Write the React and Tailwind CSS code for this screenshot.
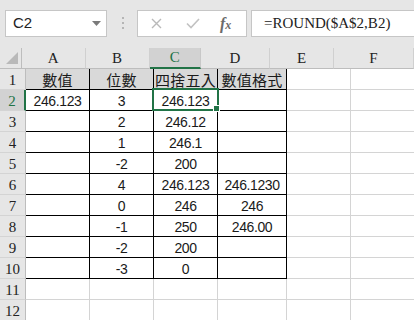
import React from "react";

const serif = { fontFamily: '"Liberation Serif", "Noto Sans CJK TC", serif' };

const cols = [
  { key: "A", w: "w-[64px]" },
  { key: "B", w: "w-[64px]" },
  { key: "C", w: "w-[64px]" },
  { key: "D", w: "w-[69px]" },
  { key: "E", w: "w-[64px]" },
  { key: "F", w: "w-[80px]" },
];

const rows = [
  ["數值", "位數", "四捨五入", "數值格式"],
  ["246.123", "3", "246.123", ""],
  ["", "2", "246.12", ""],
  ["", "1", "246.1", ""],
  ["", "-2", "200", ""],
  ["", "4", "246.123", "246.1230"],
  ["", "0", "246", "246"],
  ["", "-1", "250", "246.00"],
  ["", "-2", "200", ""],
  ["", "-3", "0", ""],
  ["", "", "", ""],
  ["", "", "", ""],
];

function Toolbar() {
  return (
    <div className="h-[48px] flex items-start pt-[10px] pl-[5px] bg-[#e6e6e6]">
      <div className="w-[102px] h-[27px] bg-white border border-[#c6c6c6] flex items-center justify-between pl-[7px] pr-[5px]">
        <span className="text-[15px] text-[#222]" style={{ fontFamily: '"Liberation Sans", sans-serif' }}>C2</span>
        <svg width="9" height="5" viewBox="0 0 9 5"><path d="M0 0h9L4.5 5z" fill="#7a7a7a" /></svg>
      </div>
      <div className="ml-[15px] mt-[7px] flex flex-col gap-[3px]">
        <span className="w-[2px] h-[2px] bg-[#b5b5b5]" />
        <span className="w-[2px] h-[2px] bg-[#b5b5b5]" />
        <span className="w-[2px] h-[2px] bg-[#b5b5b5]" />
      </div>
      <div className="ml-[13px] w-[110px] h-[27px] bg-white border border-[#c6c6c6] flex items-center">
        <svg className="ml-[13px]" width="11" height="11" viewBox="0 0 11 11">
          <path d="M1 1l9 9M10 1l-9 9" stroke="#b9b9b9" strokeWidth="1.4" />
        </svg>
        <svg className="ml-[24px]" width="14" height="11" viewBox="0 0 14 11">
          <path d="M1 5.5l4 4 8-8.5" stroke="#c2c2c2" strokeWidth="1.6" fill="none" />
        </svg>
        <span className="ml-[20px] text-[16px] italic font-bold text-[#6b6b6b] leading-none" style={serif}>
          f<span className="text-[12px]">x</span>
        </span>
      </div>
      <div className="ml-[4px] flex-1 h-[27px] bg-white border border-[#c6c6c6] border-r-0 flex items-center pl-[12px]">
        <span className="text-[15px] text-[#222]" style={serif}>=ROUND($A$2,B2)</span>
      </div>
    </div>
  );
}

function HeaderRow() {
  return (
    <div className="flex h-[21px] bg-[#e6e6e6]">
      <div className="w-[26px] h-[21px] box-border border-r border-b border-[#bdbdbd] flex items-end justify-end pr-[3px] pb-[4px]">
        <svg width="12" height="12" viewBox="0 0 12 12"><path d="M12 0V12H0z" fill="#b9b9b9" /></svg>
      </div>
      {cols.map((c) =>
        c.key === "C" ? (
          <div key={c.key} className={`${c.w} h-[21px] box-border border-r border-[#c8c8c8] border-b-2 border-b-[#217346] bg-[#d2d2d2] flex items-center justify-center text-[15px] text-[#217346]`} style={serif}>
            {c.key}
          </div>
        ) : (
          <div key={c.key} className={`${c.w} shrink-0 h-[21px] box-border border-r border-b border-r-[#d0d0d0] border-b-[#bdbdbd] flex items-center justify-center text-[15px] text-[#222]`} style={serif}>
            {c.key}
          </div>
        )
      )}
    </div>
  );
}

function Cell({ col, ri, value }) {
  const inTable = ri < 10 && col < 4;
  const isText = ri === 0;
  return (
    <div
      className={`${cols[col].w} shrink-0 h-[21px] box-border border-r border-b relative flex items-center justify-center whitespace-nowrap text-[#1a1a1a] ${
        inTable ? "border-r-black border-b-black" : "border-r-[#d4d4d4] border-b-[#d4d4d4]"
      } ${
        inTable && isText ? "bg-[#d9d9d9] text-[15px]" : "bg-white text-[14px] tracking-[-0.4px]"
      }`}
      style={{
        fontFamily: isText
          ? '"Noto Sans CJK TC", sans-serif'
          : '"Liberation Sans", sans-serif',
      }}
    >
      <span className={isText ? "leading-none tracking-[0.3px]" : "leading-none pt-[1px]"}>{value}</span>
      {ri === 1 && col === 2 && (
        <div className="absolute -left-[2px] -top-[2px] w-[67px] h-[23px] border-2 border-[#217346] z-10">
          <div className="absolute left-[59px] top-[15px] w-[7px] h-[7px] bg-[#217346] border border-white" />
        </div>
      )}
    </div>
  );
}

export default function App() {
  return (
    <div className="w-[414px] h-[320px] overflow-hidden bg-white">
      <Toolbar />
      <HeaderRow />
      {rows.map((r, ri) => (
        <div key={ri} className="flex h-[21px]">
          <div
            className={`w-[26px] shrink-0 h-[21px] box-border border-b border-b-[#d4d4d4] flex items-center justify-center text-[15px] pt-[2px] ${
              ri === 1
                ? "bg-[#d2d2d2] text-[#217346] border-r-2 border-r-[#217346]"
                : "bg-[#e6e6e6] text-[#222] border-r border-r-[#bdbdbd]"
            }`}
            style={serif}
          >
            {ri + 1}
          </div>
          {[0, 1, 2, 3, 4, 5].map((ci) => (
            <Cell key={ci} col={ci} ri={ri} value={ci < 4 ? r[ci] : ""} />
          ))}
        </div>
      ))}
    </div>
  );
}
